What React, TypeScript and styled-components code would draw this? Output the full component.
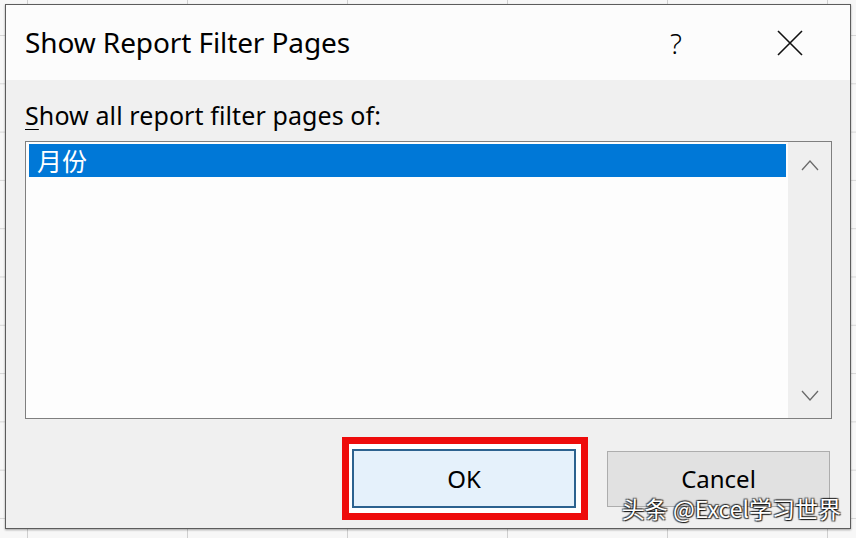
import styled, { createGlobalStyle } from "styled-components"

const GlobalStyle = createGlobalStyle`
  html, body {
    margin: 0;
    padding: 0;
  }
  body {
    font-family: "Noto Sans", "Open Sans", "Liberation Sans", sans-serif;
    color: #000;
  }
`

const UI_FONT = `"Noto Sans", "Noto Sans CJK SC", sans-serif`

const Sheet = styled.div`
  width: 856px;
  height: 538px;
  overflow: hidden;
  padding: 4px 0 0 5px;
  box-sizing: border-box;
  background-color: #f7f7f7;
  background-image:
    linear-gradient(to right, #cfcfcf 1px, transparent 1px),
    linear-gradient(to bottom, #d6d6d6 1px, transparent 1px);
  background-size: 160px 48.3px;
  background-position: 27px 35px;
`

const Dialog = styled.div`
  position: relative;
  width: 846px;
  height: 525px;
  box-sizing: border-box;
  border: 1px solid #5c5c5c;
  box-shadow: 0 1px 2px rgba(0, 0, 0, 0.35);
  display: flex;
  flex-direction: column;
  background: #f0f0f0;
  font-family: ${UI_FONT};
`

const TitleBar = styled.div`
  height: 75px;
  flex: none;
  display: flex;
  align-items: center;
  padding: 0 3px 0 19px;
  background: #fcfcfc;
`

const Title = styled.div`
  flex: 1;
  font-size: 28px;
  letter-spacing: -0.1px;
  padding-bottom: 2px;
`

const TitleButton = styled.div`
  width: 114px;
  height: 75px;
  display: flex;
  align-items: center;
  justify-content: center;
  font-size: 28px;
  font-weight: 300;
`

const Body = styled.div`
  flex: 1;
  display: flex;
  flex-direction: column;
  padding: 18px 18px 8px 19px;
`

const Label = styled.div`
  font-size: 25px;
  line-height: 34px;
  letter-spacing: 0.1px;
  & u {
    text-underline-offset: 4px;
    text-decoration-thickness: 1px;
  }
`

const ListBox = styled.div`
  margin-top: 9px;
  height: 278px;
  box-sizing: border-box;
  border: 1px solid #7f7f7f;
  background: #fdfdfd;
  display: flex;
`

const Items = styled.div`
  flex: 1;
  padding: 2px 2px 0 3px;
`

const Item = styled.div<{ $selected?: boolean }>`
  height: 33px;
  line-height: 33px;
  padding-left: 8px;
  font-family: "Noto Sans CJK SC", sans-serif;
  font-size: 25px;
  background: ${(p) => (p.$selected ? "#0078d7" : "transparent")};
  color: ${(p) => (p.$selected ? "#fff" : "#000")};
`

const ScrollBar = styled.div`
  width: 43px;
  background: #efefef;
  display: flex;
  flex-direction: column;
  justify-content: space-between;
  align-items: center;
  padding: 17px 0 16px;
`

const ButtonRow = styled.div`
  margin-top: 18px;
  display: flex;
  justify-content: flex-end;
  align-items: center;
  gap: 19px;
  padding-right: 2px;
`

const Highlight = styled.div`
  border: 7px solid #ee0b0b;
  padding: 5px 5px 5px 3px;
  background: #fff;
`

const Button = styled.div<{ $primary?: boolean }>`
  width: ${(p) => (p.$primary ? 224 : 223)}px;
  height: ${(p) => (p.$primary ? 59 : 56)}px;
  box-sizing: border-box;
  display: flex;
  align-items: center;
  justify-content: center;
  font-size: 24px;
  background: ${(p) => (p.$primary ? "#e5f1fb" : "#e1e1e1")};
  border: ${(p) => (p.$primary ? "2px solid #2c628f" : "1px solid #adadad")};
`

const Watermark = styled.div`
  position: absolute;
  right: 9px;
  bottom: 3px;
  font-family: "Noto Sans CJK SC", sans-serif;
  font-size: 23px;
  color: #fff;
  text-shadow:
    1px 1px 1px rgba(0, 0, 0, 0.8),
    -1px -1px 1px rgba(0, 0, 0, 0.6),
    1px -1px 1px rgba(0, 0, 0, 0.6),
    -1px 1px 1px rgba(0, 0, 0, 0.6);
`

const Chevron = ({ up }: { up?: boolean }) => (
  <svg width="18" height="12" viewBox="0 0 18 12">
    <path
      d={up ? "M1 11 L9 2 L17 11" : "M1 1 L9 10 L17 1"}
      fill="none"
      stroke="#6a6a6a"
      strokeWidth="1.3"
    />
  </svg>
)

const CloseIcon = () => (
  <svg width="26" height="26" viewBox="0 0 26 26">
    <path d="M1 1 L25 25 M25 1 L1 25" stroke="#111" strokeWidth="1.6" />
  </svg>
)

export default function App() {
  return (
    <>
      <GlobalStyle />
      <Sheet>
        <Dialog>
          <TitleBar>
            <Title>Show Report Filter Pages</Title>
            <TitleButton>?</TitleButton>
            <TitleButton>
              <CloseIcon />
            </TitleButton>
          </TitleBar>
          <Body>
            <Label>
              <u>S</u>how all report filter pages of:
            </Label>
            <ListBox>
              <Items>
                <Item $selected>月份</Item>
              </Items>
              <ScrollBar>
                <Chevron up />
                <Chevron />
              </ScrollBar>
            </ListBox>
            <ButtonRow>
              <Highlight>
                <Button $primary>OK</Button>
              </Highlight>
              <Button>Cancel</Button>
            </ButtonRow>
          </Body>
          <Watermark>头条 @Excel学习世界</Watermark>
        </Dialog>
      </Sheet>
    </>
  )
}
